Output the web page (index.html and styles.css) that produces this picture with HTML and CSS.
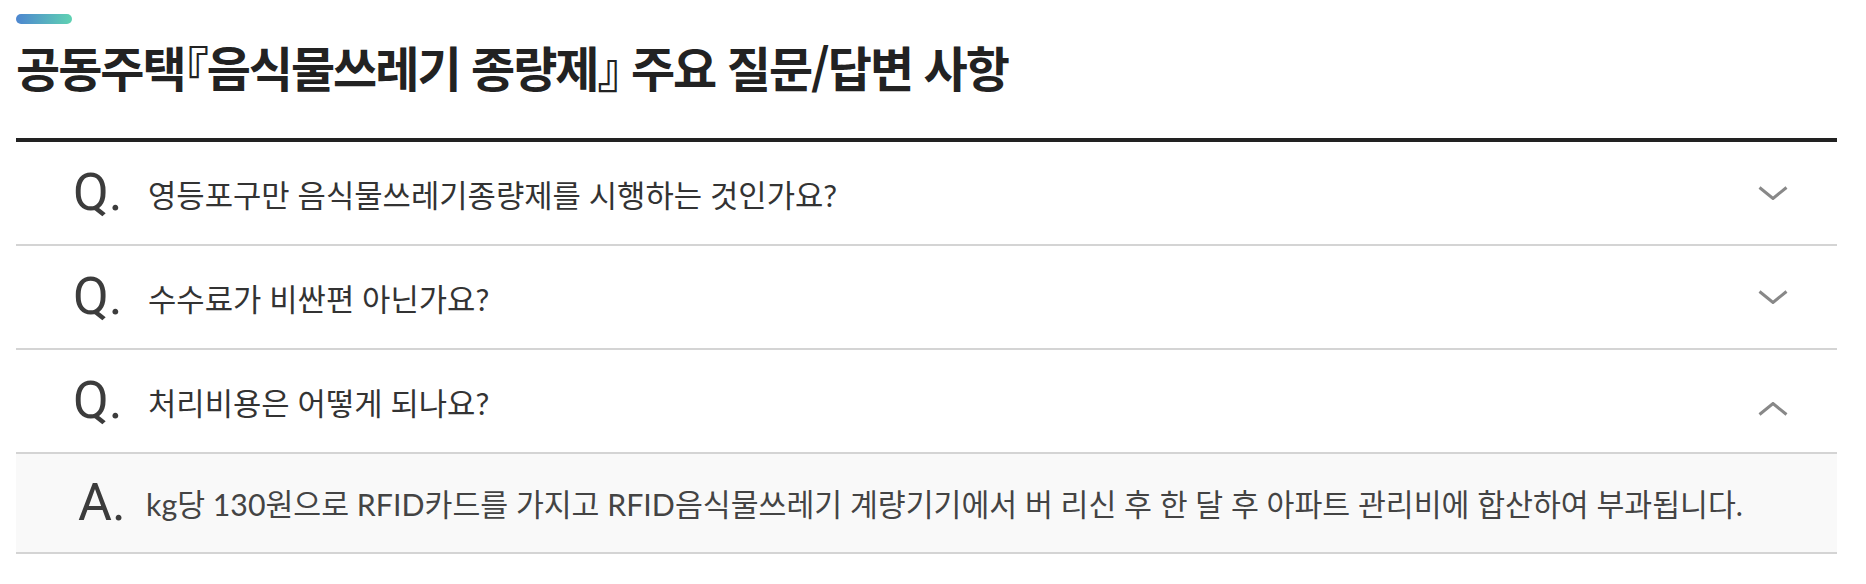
FILE: index.html
```html
<!DOCTYPE html>
<html lang="ko">
<head>
<meta charset="utf-8">
<title>FAQ</title>
<link rel="stylesheet" href="styles.css">
</head>
<body>
<div class="wrap">
  <div class="deco-bar"></div>
  <h2 class="title">공동주택『음식물쓰레기 종량제』 주요 질문/답변 사항</h2>
  <ul class="faq">
    <li class="faq-item">
      <div class="q-row">
        <span class="mark">Q.</span>
        <span class="q-text">영등포구만 음식물쓰레기종량제를 시행하는 것인가요?</span>
        <svg class="chev" width="30" height="14" viewBox="0 0 30 14"><polyline points="1.5,1.5 15,12.5 28.5,1.5" fill="none" stroke="#888" stroke-width="3"/></svg>
      </div>
    </li>
    <li class="faq-item">
      <div class="q-row">
        <span class="mark">Q.</span>
        <span class="q-text">수수료가 비싼편 아닌가요?</span>
        <svg class="chev" width="30" height="14" viewBox="0 0 30 14"><polyline points="1.5,1.5 15,12.5 28.5,1.5" fill="none" stroke="#888" stroke-width="3"/></svg>
      </div>
    </li>
    <li class="faq-item open">
      <div class="q-row">
        <span class="mark">Q.</span>
        <span class="q-text">처리비용은 어떻게 되나요?</span>
        <svg class="chev chev-up" width="30" height="14" viewBox="0 0 30 14"><polyline points="1.5,12.5 15,1.5 28.5,12.5" fill="none" stroke="#888" stroke-width="3"/></svg>
      </div>
      <div class="a-row">
        <span class="mark mark-a">A.</span>
        <span class="a-text">kg당 130원으로 RFID카드를 가지고 RFID음식물쓰레기 계량기기에서 버 리신 후 한 달 후 아파트 관리비에 합산하여 부과됩니다.</span>
      </div>
    </li>
  </ul>
</div>
</body>
</html>
```

FILE: styles.css
```css
html, body {
  margin: 0;
  padding: 0;
  background: #fff;
}

.wrap {
  margin: 14px 29px 0 16px;
  font-family: "Lato", "Noto Sans CJK KR", sans-serif;
}

.deco-bar {
  width: 56px;
  height: 10px;
  border-radius: 5px;
  background: linear-gradient(to right, #4d86d0, #5fd2b2);
}

.title {
  margin: 14px 0 44px;
  font-family: "Noto Sans CJK KR", sans-serif;
  font-feature-settings: "halt";
  font-size: 48px;
  line-height: 56px;
  font-weight: 700;
  letter-spacing: -2px;
  color: #222;
}

.faq {
  list-style: none;
  margin: 0;
  padding: 0;
  border-top: 4px solid #222;
}

.faq-item {
  border-bottom: 2px solid #d4d4d4;
}

.q-row {
  display: flex;
  align-items: center;
  height: 102px;
  padding-left: 57px;
}

.mark {
  flex: 0 0 75px;
  font-family: "Roboto", "Liberation Sans", sans-serif;
  font-size: 52px;
  line-height: 1;
  color: #3c3c3c;
}

.q-text {
  flex: 1;
  font-size: 30.8px;
  color: #333;
}

.chev {
  flex: none;
  margin-right: 49px;
}

.chev-up {
  margin-top: 16px;
}

.a-row {
  display: flex;
  align-items: center;
  height: 98px;
  padding-left: 62px;
  border-top: 2px solid #d4d4d4;
  background: #f9f9f9;
}

.mark-a {
  flex-basis: 68px;
}

.a-text {
  font-size: 30.3px;
  color: #444;
}
```
